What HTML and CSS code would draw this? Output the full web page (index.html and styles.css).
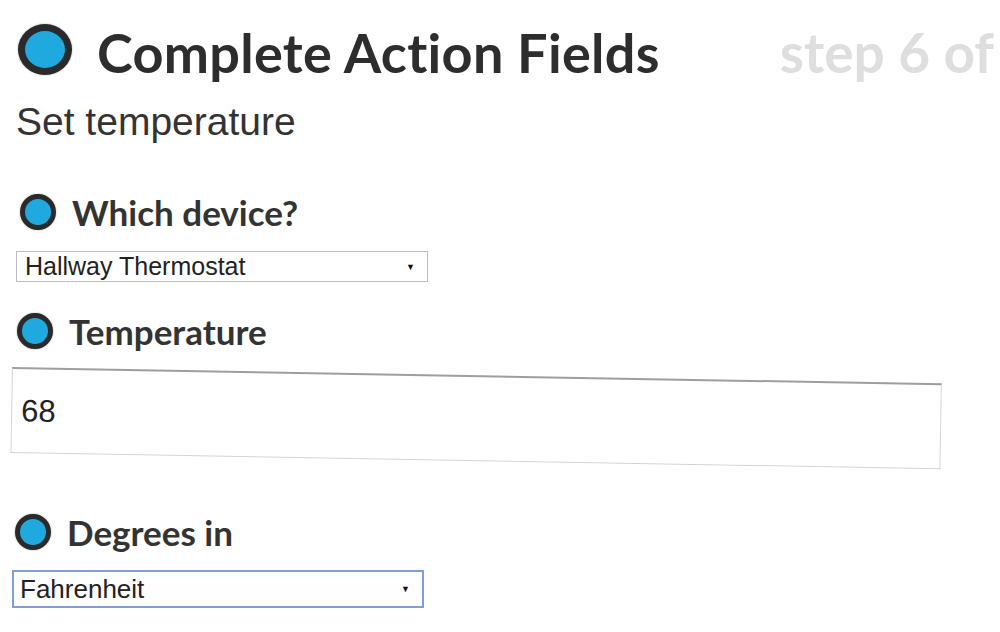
FILE: index.html
```html
<!DOCTYPE html>
<html>
<head>
<meta charset="utf-8">
<link rel="stylesheet" href="styles.css">
</head>
<body>
<div class="page">
  <div class="header">
    <span class="dot dot-big"></span>
    <h1 class="title">Complete Action Fields</h1>
    <span class="step">step 6 of</span>
  </div>
  <div class="subtitle">Set temperature</div>

  <div class="field field-device">
    <div class="label"><span class="dot"></span><span>Which device?</span></div>
    <div class="select select-device"><span>Hallway Thermostat</span><span class="arrow">&#9660;</span></div>
  </div>

  <div class="field field-temp">
    <div class="label"><span class="dot"></span><span>Temperature</span></div>
    <div class="input">68</div>
  </div>

  <div class="field field-degrees">
    <div class="label"><span class="dot"></span><span>Degrees in</span></div>
    <div class="select select-focus"><span>Fahrenheit</span><span class="arrow">&#9660;</span></div>
  </div>
</div>
</body>
</html>
```
FILE: styles.css
```css
html, body {
  margin: 0;
  padding: 0;
  background: #ffffff;
}
.page {
  width: 1000px;
  height: 632px;
  overflow: hidden;
  padding: 0 0 0 16px;
  box-sizing: border-box;
  font-family: "Liberation Sans", Arial, sans-serif;
  color: #333;
}
.header {
  display: flex;
  align-items: center;
  height: 100px;
  padding-top: 4px;
  box-sizing: border-box;
  white-space: nowrap;
}
.dot {
  display: inline-block;
  flex: none;
  width: 26px;
  height: 26px;
  border-radius: 50%;
  background: #1fa9df;
  border: 5px solid #2a2a2a;
  box-shadow: 0 0 2px rgba(0, 0, 0, 0.35);
}
.dot-big {
  width: 40px;
  height: 37px;
  border-width: 7px;
  margin-top: -5px;
  margin-left: 2px;
}
.title {
  margin: 0 0 0 25px;
  font-family: Lato, sans-serif;
  font-weight: 700;
  font-size: 54px;
  color: #2d2d2d;
  letter-spacing: 0.3px;
}
.step {
  margin-left: 120px;
  font-family: Lato, sans-serif;
  font-weight: 700;
  font-size: 55px;
  color: #dedede;
}
.subtitle {
  font-size: 39px;
  line-height: 44px;
  margin-top: 0;
  color: #333;
}
.field {
  display: flex;
  flex-direction: column;
  align-items: flex-start;
}
.label {
  display: flex;
  align-items: center;
  gap: 16px;
  font-family: Lato, sans-serif;
  font-weight: 700;
  font-size: 35px;
  color: #333;
  height: 40px;
}
.field-device { margin-top: 48px; }
.field-device .label { margin-left: 4px; }
.field-temp { margin-top: 29px; }
.field-temp .label { margin-left: 1px; }
.field-degrees { margin-top: 59px; }
.field-degrees .label { margin-left: -1px; }
.select {
  margin-top: 19px;
  display: flex;
  justify-content: space-between;
  align-items: center;
  box-sizing: border-box;
  width: 412px;
  height: 31px;
  border: 1px solid #bdbdbd;
  padding: 0 12px 0 8px;
  font-size: 25px;
  color: #222;
}
.select .arrow {
  font-size: 9px;
  color: #111;
}
.select-focus {
  margin-top: 18px;
  width: 412px;
  height: 38px;
  border: 2px solid #7e9fd6;
  margin-left: -4px;
  padding-left: 6px;
  font-size: 26px;
}
.input {
  margin-top: 16px;
  margin-left: -4px;
  box-sizing: border-box;
  width: 930px;
  height: 86px;
  border: 1px solid #d4d4d4;
  border-top: 2px solid #9e9e9e;
  padding: 24px 0 0 9px;
  font-size: 31px;
  color: #222;
  transform: rotate(1deg);
  transform-origin: left top;
}
```
